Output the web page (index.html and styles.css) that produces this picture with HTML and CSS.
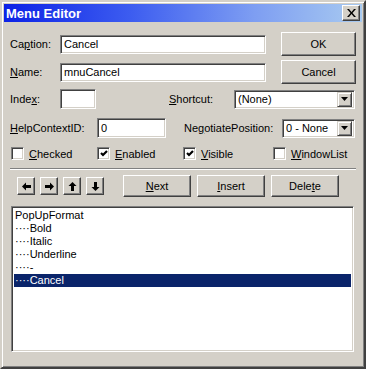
FILE: index.html
```html
<!DOCTYPE html>
<html lang="en">
<head>
    <meta charset="UTF-8">
    <title>Menu Editor</title>
    <link rel="stylesheet" href="styles.css">
</head>
<body>
<div class="window">
    <div class="titlebar">
        <span class="title">Menu Editor</span>
        <a href="javascript:;" class="close">
            <svg width="9" height="8" viewBox="0 0 9 8"><path d="M0 0h2l2.5 3 2.5-3h2l-3.5 4 3.5 4h-2l-2.5-3-2.5 3h-2l3.5-4z" fill="#000"/></svg>
        </a>
    </div>
    <div class="content">
        <div class="row row-top">
            <span class="lbl lbl-main">Ca<u>p</u>tion:</span>
            <div class="field field-wide">Cancel</div>
            <a href="javascript:;" class="btn btn-side">OK</a>
        </div>
        <div class="row row-second">
            <span class="lbl lbl-main"><u>N</u>ame:</span>
            <div class="field field-wide">mnuCancel</div>
            <a href="javascript:;" class="btn btn-side">Cancel</a>
        </div>
        <div class="row row-fields">
            <span class="lbl lbl-main">Inde<u>x</u>:</span>
            <div class="field field-index"></div>
            <span class="lbl lbl-shortcut"><u>S</u>hortcut:</span>
            <div class="combo combo-shortcut">
                <span class="combo-text">(None)</span>
                <span class="combo-btn"><svg width="7" height="4" viewBox="0 0 7 4"><path d="M0 0h7l-3.5 4z" fill="#000"/></svg></span>
            </div>
        </div>
        <div class="row row-fields row-help">
            <span class="lbl lbl-help"><u>H</u>elpContextID:</span>
            <div class="field field-help">0</div>
            <span class="lbl lbl-negotiate">Ne<u>g</u>otiatePosition:</span>
            <div class="combo combo-negotiate">
                <span class="combo-text">0 - None</span>
                <span class="combo-btn"><svg width="7" height="4" viewBox="0 0 7 4"><path d="M0 0h7l-3.5 4z" fill="#000"/></svg></span>
            </div>
        </div>
        <div class="row row-checks">
            <div class="check check-1">
                <span class="box"></span><span><u>C</u>hecked</span>
            </div>
            <div class="check check-2">
                <span class="box"><svg width="8" height="7" viewBox="0 0 8 7"><path d="M1 3l2 2 4-4" stroke="#000" stroke-width="2.2" fill="none"/></svg></span><span><u>E</u>nabled</span>
            </div>
            <div class="check check-3">
                <span class="box"><svg width="8" height="7" viewBox="0 0 8 7"><path d="M1 3l2 2 4-4" stroke="#000" stroke-width="2.2" fill="none"/></svg></span><span><u>V</u>isible</span>
            </div>
            <div class="check">
                <span class="box"></span><span><u>W</u>indowList</span>
            </div>
        </div>
        <div class="separator"></div>
        <div class="row row-buttons">
            <div class="arrows">
                <a href="javascript:;" class="btn arrow">
                    <svg width="9" height="9" viewBox="0 0 9 9"><path d="M0 4.5l4-4v2.5h5v3h-5v2.5z" fill="#000"/></svg>
                </a>
                <a href="javascript:;" class="btn arrow">
                    <svg width="9" height="9" viewBox="0 0 9 9"><path d="M9 4.5l-4-4v2.5h-5v3h5v2.5z" fill="#000"/></svg>
                </a>
                <a href="javascript:;" class="btn arrow">
                    <svg width="9" height="9" viewBox="0 0 9 9"><path d="M4.5 0l4 4h-2.5v5h-3v-5h-2.5z" fill="#000"/></svg>
                </a>
                <a href="javascript:;" class="btn arrow">
                    <svg width="9" height="9" viewBox="0 0 9 9"><path d="M4.5 9l4-4h-2.5v-5h-3v5h-2.5z" fill="#000"/></svg>
                </a>
            </div>
            <a href="javascript:;" class="btn btn-action btn-next"><u>N</u>ext</a>
            <a href="javascript:;" class="btn btn-action"><u>I</u>nsert</a>
            <a href="javascript:;" class="btn btn-action">Dele<u>t</u>e</a>
        </div>
        <ul class="list">
            <li>PopUpFormat</li>
            <li>····Bold</li>
            <li>····Italic</li>
            <li>····Underline</li>
            <li>····-</li>
            <li class="current">····Cancel</li>
        </ul>
    </div>
</div>
</body>
</html>
```

FILE: styles.css
```css
* {
    margin: 0;
    padding: 0;
    box-sizing: border-box;
}

ul, li {
    list-style: none;
}

body {
    background-color: #d4d0c8;
    font-family: "Liberation Sans", Arial, sans-serif;
    font-size: 11px;
    color: #000;
}

a {
    color: #000;
    text-decoration: none;
}

.window {
    width: 366px;
    height: 369px;
    padding: 2px;
    border: 2px solid;
    border-color: #d4d0c8 #404040 #404040 #d4d0c8;
    box-shadow: inset 1px 1px #fff, inset -1px -1px #808080;
    background-color: #d4d0c8;
}

.titlebar {
    display: flex;
    align-items: center;
    height: 18px;
    padding: 0 2px;
    background: linear-gradient(to right, #0c22e6 0%, #3c5cf0 35%, #7e9ef2 70%, #a8caf0 100%);
}

.title {
    flex: 1;
    color: #fff;
    font-weight: bold;
    font-size: 13px;
}

.close {
    display: flex;
    align-items: center;
    justify-content: center;
    width: 18px;
    height: 16px;
    background-color: #d4d0c8;
    border: 1px solid;
    border-color: #fff #404040 #404040 #fff;
    box-shadow: inset -1px -1px #808080;
}

.content {
    padding: 10px 0 0 6px;
}

.row {
    display: flex;
    align-items: center;
}

.row-second {
    margin-top: 4px;
}

.row-fields {
    margin-top: 5px;
    height: 20px;
}

.row-help {
    margin-top: 9px;
}

.lbl {
    white-space: nowrap;
}

.lbl-main {
    width: 50px;
}

.lbl-shortcut {
    width: 65px;
    margin-left: 73px;
}

.lbl-help {
    width: 87px;
}

.lbl-negotiate {
    width: 98px;
    margin-left: 18px;
}

.field {
    height: 20px;
    padding: 2px 0 0 3px;
    background-color: #fff;
    border: 1px solid;
    border-color: #808080 #fff #fff #808080;
    box-shadow: inset 1px 1px #404040, inset -1px -1px #d4d0c8;
    line-height: 14px;
}

.row-top .field,
.row-second .field {
    height: 19px;
    line-height: 13px;
}

.field-wide {
    width: 206px;
}

.field-index {
    width: 36px;
}

.field-help {
    width: 69px;
}

.combo {
    display: flex;
    align-items: center;
    height: 19px;
    padding: 2px;
    background-color: #fff;
    border: 1px solid;
    border-color: #808080 #fff #fff #808080;
    box-shadow: inset 1px 1px #404040, inset -1px -1px #d4d0c8;
}

.combo-shortcut {
    width: 121px;
}

.combo-negotiate {
    width: 73px;
}

.combo-text {
    flex: 1;
    padding-left: 1px;
}

.combo-btn {
    display: flex;
    align-items: center;
    justify-content: center;
    width: 15px;
    height: 15px;
    background-color: #d4d0c8;
    border: 1px solid;
    border-color: #d4d0c8 #404040 #404040 #d4d0c8;
    box-shadow: inset 1px 1px #fff, inset -1px -1px #808080;
}

.btn {
    display: flex;
    align-items: center;
    justify-content: center;
    background-color: #d4d0c8;
    border: 1px solid;
    border-color: #fff #404040 #404040 #fff;
    box-shadow: inset -1px -1px #808080, inset 1px 1px #d4d0c8;
}

.btn-side {
    width: 75px;
    height: 24px;
    margin-left: 15px;
}

.row-checks {
    margin-top: 9px;
    height: 13px;
}

.check {
    display: flex;
    align-items: center;
    gap: 5px;
}

.check-1 {
    width: 86px;
    margin-left: 1px;
}

.check-2 {
    width: 86px;
}

.check-3 {
    width: 90px;
}

.box {
    display: flex;
    align-items: center;
    justify-content: center;
    width: 13px;
    height: 13px;
    background-color: #fff;
    border: 1px solid;
    border-color: #808080 #fff #fff #808080;
    box-shadow: inset 1px 1px #404040, inset -1px -1px #d4d0c8;
}

.separator {
    width: 346px;
    height: 2px;
    margin-top: 8px;
    border-top: 1px solid #808080;
    border-bottom: 1px solid #fff;
}

.row-buttons {
    margin-top: 5px;
    height: 22px;
}

.arrows {
    display: flex;
    gap: 5px;
    margin-left: 7px;
}

.arrow {
    width: 18px;
    height: 18px;
}

.btn-action {
    width: 68px;
    height: 22px;
    margin-left: 6px;
}

.btn-next {
    margin-left: 19px;
}

.list {
    width: 343px;
    height: 146px;
    margin: 9px 0 0 1px;
    padding: 2px;
    background-color: #fff;
    border: 1px solid;
    border-color: #808080 #fff #fff #808080;
    box-shadow: inset 1px 1px #404040, inset -1px -1px #d4d0c8;
}

.list li {
    height: 13px;
    line-height: 13px;
    padding-left: 1px;
    white-space: nowrap;
}

.list li.current {
    background-color: #0a246a;
    color: #fff;
}
```
